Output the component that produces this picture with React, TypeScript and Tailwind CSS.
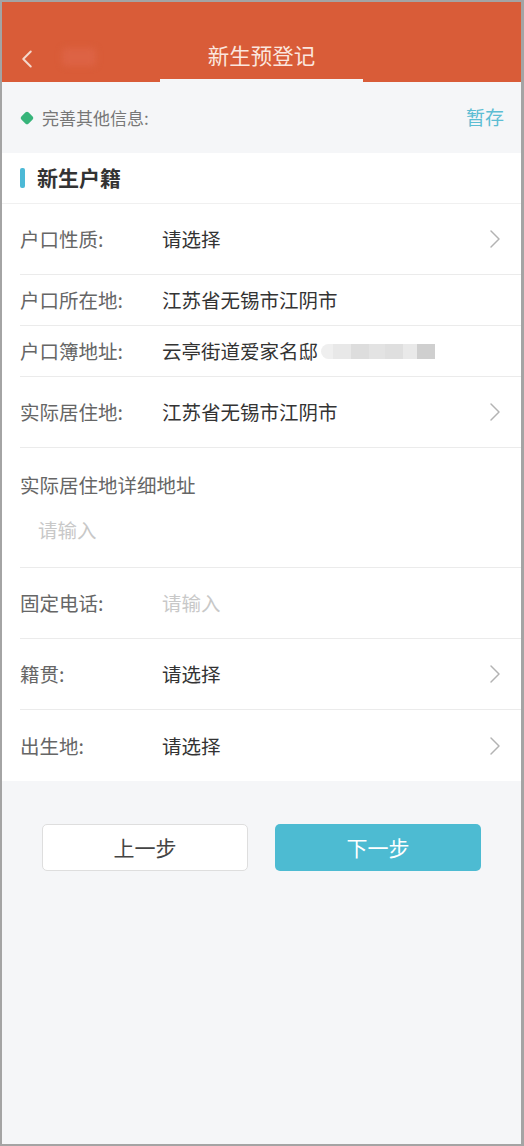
import { ChevronLeft, ChevronRight } from 'lucide-react';

type Row = {
  label: string;
  value: string;
  kind: 'select' | 'text' | 'input';
  tall?: boolean;
  blurred?: boolean;
};

const rows: Row[] = [
  { label: '户口性质:', value: '请选择', kind: 'select', tall: true },
  { label: '户口所在地:', value: '江苏省无锡市江阴市', kind: 'text' },
  { label: '户口簿地址:', value: '云亭街道爱家名邸', kind: 'text', blurred: true },
  { label: '实际居住地:', value: '江苏省无锡市江阴市', kind: 'select', tall: true },
];

const rowsAfter: Row[] = [
  { label: '固定电话:', value: '请输入', kind: 'input', tall: true },
  { label: '籍贯:', value: '请选择', kind: 'select', tall: true },
  { label: '出生地:', value: '请选择', kind: 'select', tall: true },
];

const FormRow = ({ row, last }: { row: Row; last?: boolean }) => (
  <div className="pl-[18px]">
    <div
      className={`flex items-center pr-[10px] ${row.tall ? 'h-[71px]' : 'h-[51px]'} ${
        last ? '' : 'border-b border-[#ebebeb]'
      }`}
    >
      <span className="w-[142px] shrink-0 text-[19.5px] text-[#666]">{row.label}</span>
      <span
        className={`flex-1 flex items-center text-[19.5px] ${
          row.kind === 'input' ? 'text-[#c8c8c8]' : 'text-[#333]'
        }`}
      >
        {row.value}
        {row.blurred && (
          <span className="ml-[3px] flex h-[16px] items-center">
            <span className="h-[15px] w-[12px] rounded-l-full bg-[#efefef]" />
            <span className="h-[15px] w-[18px] bg-[#e8e8e8]" />
            <span className="h-[15px] w-[18px] bg-[#dddddd]" />
            <span className="h-[15px] w-[16px] bg-[#e3e3e3]" />
            <span className="h-[15px] w-[18px] bg-[#dfdfdf]" />
            <span className="h-[15px] w-[14px] bg-[#e9e9e9]" />
            <span className="h-[15px] w-[18px] bg-[#cfcfcf]" />
          </span>
        )}
      </span>
      {row.kind === 'select' && <ChevronRight className="h-[32px] w-[32px] text-[#b3b3b3]" strokeWidth={1.1} />}
    </div>
  </div>
);

export default function App() {
  return (
    <div
      className="flex h-[1146px] w-[524px] flex-col border-2 border-r-[3px] border-[#a4a4a4] bg-[#f5f6f8]"
      style={{ fontFamily: '"Noto Sans CJK SC", "Noto Sans", sans-serif' }}
    >
      {/* header */}
      <div className="flex flex-col bg-[#d95c38]">
        <div className="relative flex h-[77px] items-center justify-center">
          <ChevronLeft className="absolute left-[10px] top-[42px] h-[30px] w-[30px] text-[#f4d8cc]" strokeWidth={1.6} />
          <span className="absolute left-[60px] top-[46px] h-[18px] w-[34px] rounded bg-[#dd6344] blur-[3px]" />
          <span className="pt-[30px] text-[21.5px] text-[#fbe6de]">新生预登记</span>
        </div>
        <div className="flex h-[3px]">
          <div className="w-[158px]" />
          <div className="w-[203px] bg-[#f5f6f8]" />
          <div className="flex-1" />
        </div>
      </div>

      {/* info bar */}
      <div className="flex h-[71px] items-center justify-between pl-[19px] pr-[17px]">
        <div className="flex items-center">
          <span className="ml-[1px] h-[10px] w-[10px] rotate-45 rounded-[2px] bg-[#37b47a]" />
          <span className="ml-[10px] text-[17px] text-[#777]">完善其他信息:</span>
        </div>
        <span className="text-[19px] text-[#5cbdd3]">暂存</span>
      </div>

      {/* form */}
      <div className="bg-white">
        <div className="flex h-[51px] items-center border-b border-[#f0f0f0] pl-[18px]">
          <span className="h-[20px] w-[5px] rounded-[2px] bg-[#4cb9d6]" />
          <span className="ml-[12px] text-[21px] font-bold text-[#333]">新生户籍</span>
        </div>

        {rows.map((r) => (
          <FormRow key={r.label} row={r} />
        ))}

        <div className="pl-[18px]">
          <div className="flex h-[120px] flex-col border-b border-[#ebebeb] pt-[22px]">
            <span className="text-[19.5px] text-[#666]">实际居住地详细地址</span>
            <span className="ml-[18px] mt-[16px] text-[19.5px] text-[#c8c8c8]">请输入</span>
          </div>
        </div>

        {rowsAfter.map((r, i) => (
          <FormRow key={r.label} row={r} last={i === rowsAfter.length - 1} />
        ))}
      </div>

      {/* buttons */}
      <div className="mt-[43px] flex gap-[27px] pl-[40px]">
        <button className="h-[47px] w-[206px] rounded-[5px] border border-[#dedede] bg-white text-[21px] text-[#444]">
          上一步
        </button>
        <button className="h-[47px] w-[206px] rounded-[5px] bg-[#4dbbd2] text-[21px] text-white">下一步</button>
      </div>
    </div>
  );
}
